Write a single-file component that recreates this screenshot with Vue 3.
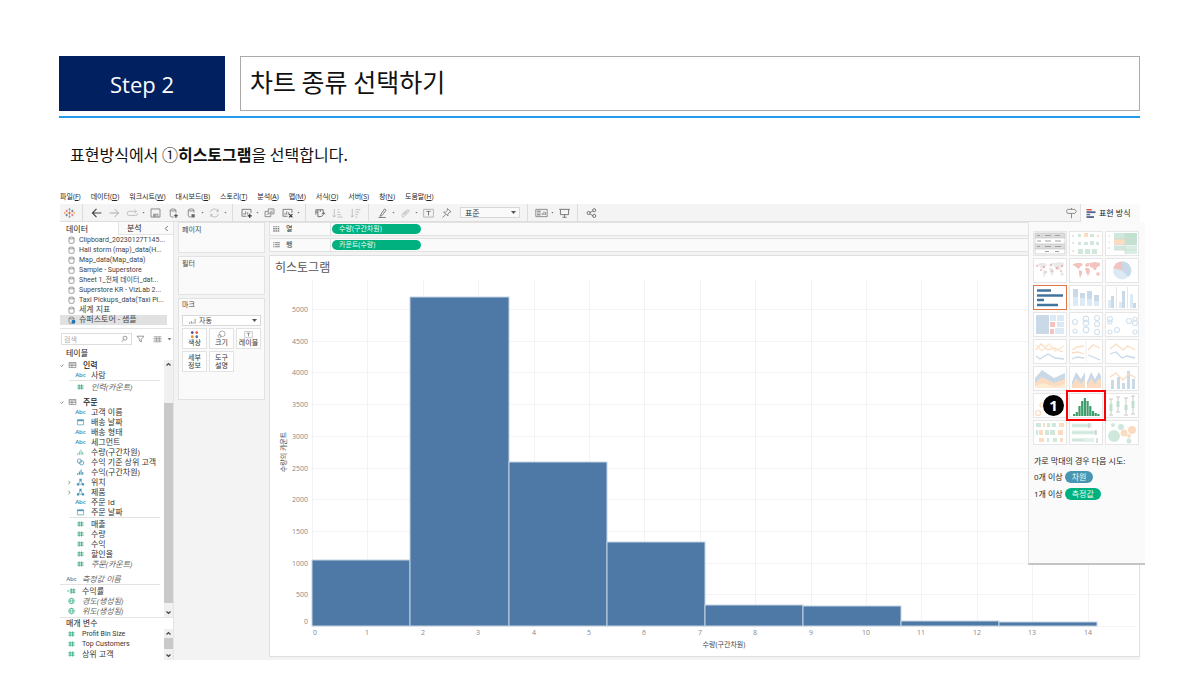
<script setup>
import { ref } from 'vue'

const rect = (x, y, w, h) => `M${x} ${y}h${w}v${h}h${-w}z`
const circ = (x, y, r) => `M${x - r} ${y}a${r} ${r} 0 1 0 ${2 * r} 0a${r} ${r} 0 1 0 ${-2 * r} 0z`
const fill = (d, f) => ({ d, fill: f, stroke: 'none' })
const line = (d, s, w = 1) => ({ d, fill: 'none', stroke: s, w })

const G = '#666'
const L = '#b4b4b4'
const B = '#4b96b5'
const N = '#3fae85'

const icons = {
  logo: [
    line('M8 5v4M6 7h4', '#e8762d', 1.2), line('M8 1v3M6.7 2.5h2.6M8 10v3M6.7 11.5h2.6', '#7099a6'),
    line('M4.5 3v3M3 4.5h3M11.5 8v3M10 9.5h3', '#e0707c'), line('M11.5 3v3M10 4.5h3M4.5 8v3M3 9.5h3', '#5b6591'),
    line('M2 6v2M1.3 7h2M14 6v2M12.7 7h2', '#eb912b', 0.8)
  ],
  back: [line('M14 7H3M8 2L3 7l5 5', '#444', 1.4)],
  forward: [line('M2 7h11M8 2l5 5-5 5', '#aaa', 1.2)],
  replay: [line('M12 5H4a2 2 0 0 0 0 5h8a2 2 0 0 0 2-2.500M10.500 2.500L13 5l-2.500 2.500', L)],
  save: [line('M2.500 2h11v10h-11zM5 8.500h6V12', '#777'), fill(rect(5, 9, 4, 3), '#999')],
  dbAdd: [line('M4 3.5c0-2 7-2 7 0v3M4 3.5v7c0 1 2 1.500 4 1.500M4 3.500c0 1.500 7 1.500 7 0', '#777'), line('M11 8v5M8.500 10.500h5', '#444', 1.300)],
  dbPause: [line('M4 3.5c0-2 7-2 7 0v3M4 3.5v7c0 1 2 1.500 4 1.500M4 3.500c0 1.500 7 1.500 7 0', '#777'), fill(rect(8, 8.5, 4, 4), '#666')],
  refresh: [line('M3 6a5 5 0 0 1 9.500-1M13 8a5 5 0 0 1-9.500 1M12.500 2v3H10M3.500 12V9H6', L)],
  sheetAdd: [line('M8 11H2.500V2.500h11v4.500M5 9V7M7 9V5M9.500 9V6', G), line('M12 8v5M9.500 10.500h5', '#333', 1.400)],
  copy: [line('M6.500 2h7v6h-7zM6 5H2.500v6.500h7V8.500M9 7V5M11 7V4M5 9.500V8', '#777')],
  sheetClear: [line('M8 11H2.500V2.500h11v4.500M5 9V7M7 9V5M9.500 9V6', G), line('M10 8.500l4 4M14 8.500l-4 4', '#333', 1.400)],
  swap: [line('M3.500 3h9v3.500M3.500 3v6M6 3v8.500h2.500M3.500 6H6M9 3v2.500M8 11.500c4 0 5-2 5-5M11 8.500l2-2.500 2 2.500', G, 1.100)],
  asc: [line('M4 2v10M2 10l2 2 2-2M8 3h2M8 6h3M8 9h4M8 12h6', L)],
  desc: [line('M4 2v10M2 10l2 2 2-2M8 3h6M8 6h4.500M8 9h3M8 12h2', L)],
  pen: [line('M5.500 9.500l5-7.500 2 1.500-5 6.500-2.500 1zM3 12.500h9', G)],
  clip: [line('M5 9l5-5.500c1.500-1.500 3.500.5 2 2L6.500 11c-2 2-4-.5-2.500-2l4.500-5M6.500 9l4-4', L)],
  label: [line('M2 2.500h12v9.500H2z', '#aaa'), line('M5.500 5h5M8 5v5', '#777', 1.200)],
  pin: [line('M9 1.500l4.500 4-2 .5-2 3 .5 1.500L4.500 6l2 .2 2.500-2.500zM7 9l-4 3.500', '#777')],
  fit: [line('M1 2.500h14v9H1zM9 9.500V7M11 9.500V5M13 9.500V6', '#777'), fill(rect(2.5, 4, 4.5, 2.500) + rect(2.5, 7.500, 4.5, 2.500), '#999')],
  present: [line('M1.500 2.500h13M3 2.500v6.500h10V2.500M8 9v3M5.500 12.300h5', '#777', 1.200)],
  share: [line('M6 6.500l4-2.500M6 8l4 2.500', G), line(circ(4.5, 7, 1.9) + circ(11.3, 3.6, 1.9) + circ(11.3, 10.6, 1.9), G, 1.100)],
  guide: [line('M3.500 2.500h8.500l2 2.500-2 2.500H3.500c-2 0-2-5 0-5zM8 7.500v6M8 .8v1.700', '#777')],
  showme: [fill(rect(2, 1, 7, 2), '#d9534f'), fill(rect(2, 4, 12, 2.500), '#5b6591'), fill(rect(2, 7.500, 5, 2), '#4e79a7'), fill(rect(2, 10.500, 10, 2.500), '#5b6591')],
  db: [line('M3.500 3.500c0-2.300 9-2.300 9 0v8c0 2-9 2-9 0zM3.500 3.500c0 2.200 9 2.200 9 0', '#777', 1.300)],
  dbOn: [line('M3.500 3.500c0-2.300 9-2.300 9 0v8c0 2-9 2-9 0zM3.500 3.500c0 2.200 9 2.200 9 0', '#777', 1.300), fill(circ(11.5, 10, 3.500), '#1f77b4')],
  find: [line(circ(9, 5.5, 3.500) + 'M6.500 8L3 12', '#777', 1.300)],
  filter: [line('M2 2h12L9.500 7.500V12l-3-1.500v-3z', '#777', 1.300)],
  grid: [line('M1 3h14M1 6h14M1 9h14M1 12h14M6 3v9M11 3v9', '#888', 1.200)],
  table: [line('M2 2.500h12v9H2zM2 5h12M2 8h12M7 5v6.500', '#777', 1.200)],
  hash: [line('M5.500 2.500v9M10 2.500v9M2.500 5h11M2.500 9h11', N, 1.700)],
  calcHash: [line('M7.500 2.500v9M12 2.500v9M5 5h10M5 9h10', N, 1.700), line('M0 7h4', N, 1.500)],
  date: [line('M2.500 3h11v9h-11z', B, 1.200), fill(rect(2.500, 3, 11, 2.500), B)],
  bin: [fill(rect(2, 9, 2, 3) + rect(5, 6, 2, 6) + rect(8, 3, 2, 9) + rect(11, 7, 2, 5), B)],
  binGreen: [fill(rect(2, 9, 2, 3) + rect(5, 6, 2, 6) + rect(8, 3, 2, 9) + rect(11, 7, 2, 5), '#7cc9aa')],
  set: [line(circ(6, 5.5, 3.800) + circ(10, 8.500, 3.800), B, 1.400)],
  tree: [line('M8 4L4 11h8z', B, 1.200), fill(rect(6, 1, 4, 4) + rect(1.500, 9, 4, 4) + rect(10.500, 9, 4, 4), B)],
  globe: [line(circ(8, 7, 5) + 'M3 7h10M8 2c-3 3-3 7 0 10M8 2c3 3 3 7 0 10', N, 1.200)],
  cols: [fill([2, 6, 10].map(x => rect(x, 2, 3, 2) + rect(x, 5, 3, 3) + rect(x, 9, 3, 3)).join(''), '#888')],
  rows: [fill([2, 5.500, 9].map(y => rect(2, y, 2, 2) + rect(5, y, 9, 2)).join(''), '#888')],
  bars: [line('M3 12V9M6 12V7M9 12V9M12.500 12V3', '#888', 1.500)],
  color: [fill(circ(4.500, 4, 2.200), '#5b4a8f'), fill(circ(11.500, 4, 2.200), '#e15759'), fill(circ(4.500, 10.500, 2.200), '#f28e2b'), fill(circ(11.500, 10.500, 2.200), '#4e79a7')],
  size: [line(circ(9, 6, 4.500), '#888'), line(circ(5, 9.500, 2.500), '#888')]
}

const toolbar = [
  'logo', '|', 'back', 'forward', 'replay', 'v', 'save', 'dbAdd', 'dbPause', 'v', 'refresh', 'v', '|',
  'sheetAdd', 'v', 'copy', 'sheetClear', 'v', '|', 'swap', 'asc', 'desc', '|', 'pen', 'v', 'clip', 'v', 'label', 'pin'
]
const toolbarEnd = ['|', 'fit', 'v', 'present', '|', 'share']

const menus = [
  ['파일', 'F'], ['데이터', 'D'], ['워크시트', 'W'], ['대시보드', 'B'], ['스토리', 'T'], ['분석', 'A'],
  ['맵', 'M'], ['서식', 'O'], ['서버', 'S'], ['창', 'N'], ['도움말', 'H']
]

const sources = [
  'Clipboard_20230127T145...', 'Hail storm (map)_data(H...', 'Map_data(Map_data)', 'Sample - Superstore',
  'Sheet 1_전체 데이터_dat...', 'Superstore KR - VizLab 2...', 'Taxi Pickups_data(Taxi Pi...', '세계 지표', '슈퍼스토어 - 샘플'
]

const people = [['abc', '사람'], '-', ['hash', '인력(카운트)', 1]]
const orders = [
  ['abc', '고객 이름'], ['date', '배송 날짜'], ['abc', '배송 형태'], ['abc', '세그먼트'], ['binGreen', '수량(구간차원)'],
  ['set', '수익 기준 상위 고객'], ['bin', '수익(구간차원)'], ['tree', '위치', 0, 1], ['tree', '제품', 0, 1],
  ['abc', '주문 Id'], ['date', '주문 날짜'], '-', ['hash', '매출'], ['hash', '수량'], ['hash', '수익'], ['hash', '할인율'],
  ['hash', '주문(카운트)', 1]
]
const loose = [['abc', '측정값 이름', 1], '-', ['calcHash', '수익률'], ['globe', '경도(생성됨)', 1], ['globe', '위도(생성됨)', 1]]
const params = ['Profit Bin Size', 'Top Customers', '상위 고객']

const search = ref('')

/* histogram */
const edges = [42, 140, 239, 337, 435, 533, 631, 729, 827]
const tops = [280, 17, 182, 262, 325, 326, 341, 342]
const bars = tops.map((y, i) => ({ x: edges[i], y, w: edges[i + 1] - edges[i], h: 346 - y }))
const xTicks = Array.from({ length: 15 }, (_, i) => ({ v: i, x: Math.round(42 + 55.4 * i) }))
const yTicks = Array.from({ length: 11 }, (_, i) => ({ v: i * 500, y: Math.round(346 - 31.7 * i) }))

/* chart type thumbnails */
const blue = '#c9d9e7'
const sky = '#dceaf5'
const peach = '#fbdcc0'
const mint = '#cfe8db'
const pink = '#f3c3bf'
const world = 'M3 7l4-2 5 0 2 2-3 2-1 2-2-1-2-2zM10 12l3 1 0 3-2 4-1-4zM16 7l2-2 3 0-1 3-3 1zM16 10l4 0 1 4-2 4-2-4zM21 5l5-1 5 1 0 3-3 1-1 3-2 0-1-2-3-1zM27 15l3-1 1 3-3 1z'
const rings = pts => pts.map(([x, y, r]) => circ(x, y, r)).join('')

const tiles = [
  { n: '텍스트 표', s: [fill(rect(2, 2, 30, 5) + rect(2, 13, 30, 5), '#dcdcdc'), line('M2 2h30v21H2zM2 7h30M2 13h30M2 18h30', '#c4c4c4', 0.7), line('M4 4.500h3M12 4.500h6M22 4.500h5M4 10h4M12 10h6M22 10h6M4 15.500h3M12 15.500h6M22 15.500h6M12 20.500h4M22 20.500h4', '#a0a0a0', 1)] },
  { n: '히트 맵', s: [fill(rect(9, 3, 3, 3) + rect(21, 3, 4, 3) + rect(9, 11, 3, 3) + rect(15, 11, 4, 3) + rect(21, 10, 4, 4) + rect(27, 11, 3, 3) + rect(9, 18, 5, 5) + rect(16, 18, 5, 5) + rect(23, 18, 5, 5), mint), fill(rect(15, 2, 4, 4) + rect(28, 4, 2, 2), peach), line('M3 5h2M3 12h2M3 20h2', '#ccc')] },
  { n: '하이라이트 테이블', s: [fill(rect(9, 2, 11, 6) + rect(9, 15, 11, 4), mint), fill(rect(20, 2, 12, 12), '#c3e1d0'), fill(rect(9, 8, 11, 6), peach), fill(rect(20, 15, 12, 8), '#d9eee3'), line('M9 8h23M9 14h23M9 19h23M20 2v21M3 5h2M3 11h2M3 17h2', '#cfdad4', 0.8)] },
  { n: '기호 맵', s: [fill(world, '#e9e9e9'), fill(rings([[4, 8, 1], [11, 9, 1.300], [13, 14, 1], [18, 7, 1], [24, 10, 1.500], [28, 13, 1], [29, 8, 1.200], [19, 13, 1], [8, 12, 1]]), '#eeb8b8')] },
  { n: '맵', s: [fill(world, pink)] },
  { n: '파이 차트', s: [fill(circ(17, 12.500, 9), sky), fill('M17 12.500V3.500A9 9 0 0 0 8.300 10z', pink), fill('M17 12.500V3.500A9 9 0 0 1 23.500 19z', blue)] },
  { n: '가로 막대', active: true, s: [line('M4 5.500h14M4 10.500h26M4 15h7M4 20h21', '#41759f', 2.500)] },
  { n: '누적 막대', s: [fill(rect(4, 4, 5, 8) + rect(11, 8, 5, 5) + rect(18, 6, 5, 8) + rect(25, 10, 5, 6), blue), fill(rect(4, 12, 5, 9) + rect(11, 13, 5, 8) + rect(18, 14, 5, 7) + rect(25, 16, 5, 5), sky)] },
  { n: '병렬 막대', s: [fill(rect(3, 15, 3, 8) + rect(14, 17, 3, 6) + rect(25, 9, 3, 14), sky), fill(rect(6, 11, 3, 12) + rect(17, 6, 3, 17) + rect(28, 18, 3, 5), blue), line('M11.500 2v21M22.500 2v21', '#e6e6e6')] },
  { n: '트리맵', s: [fill(rect(3, 3, 13, 19), blue), fill(rect(17, 3, 6, 6) + rect(24, 3, 7, 6) + rect(24, 10, 7, 5) + rect(22, 16, 9, 6), sky), fill(rect(17, 10, 5, 5) + rect(17, 17, 4, 5), pink)] },
  { n: '원 뷰', s: [line(rings([[6, 10, 2.500], [6, 19, 2], [17, 7, 2.800], [17, 11, 2.800], [17, 18, 2.800], [28, 6, 2.500], [28, 12, 2.500], [28, 20, 2.500]]), '#d3e2ee', 1.200)] },
  { n: '병렬 원', s: [line(rings([[5, 7, 2.500], [5, 10, 2], [12, 18, 2.500], [5, 20, 2], [24, 9, 2.500], [30, 7, 2], [30, 11, 2.500], [30, 20, 2]]), '#d3e2ee', 1.200)] },
  { n: '연속 라인', s: [line('M3 11l5-6 7 6 6-2 9 4', peach, 1.300), line('M3 6l6 6 7-7 6 7 9-5', '#fbe6c8', 1.200), line('M3 17l4 3 8-5 7 4 9 1', blue, 1.300)] },
  { n: '불연속 라인', s: [line('M3 11l5-3 7-1M19 11l5-5 7 3M3 14l6-1 6 2', peach, 1.300), line('M3 20l5-2 7 1M19 16l5 2 7 3', blue, 1.300), line('M17 2v21', '#eee')] },
  { n: '이중 라인', s: [line('M5 10l6-5 7 6 5-4 7 4', peach, 1.300), line('M5 15l6-2 6 6 5-2 8 2', blue, 1.300)] },
  { n: '연속 영역', s: [fill('M2 12l7-8 12 8 11-5v8l-11 6-12-7-7 6z', blue), fill('M2 17l7-6 12 6 11-4v9H2z', peach), fill('M2 20l8-3 11 4 11-3v4H2z', '#fdebd3')] },
  { n: '불연속 영역', s: [fill('M3 16l4-10 5 7 4-7v16H3zM18 16l4-10 4 7 4-7 2 4v12H18z', blue), fill('M3 20l4-8 5 6 4-5v9H3zM18 20l4-8 4 6 4-6 2 3v7H18z', peach)] },
  { n: '이중 조합', s: [fill(rect(6, 14, 3, 9) + rect(12, 11, 3, 12) + rect(17, 17, 3, 6) + rect(22, 5, 3, 18) + rect(27, 13, 3, 10), blue), line('M5 11l6-4 7 7 6-6 7 4', peach, 1.300)] },
  { n: '산점도', s: [line(rings([[5, 20, 2.500], [9, 12, 2]]), peach, 1.200)] },
  { n: '히스토그램', picked: true, s: [fill([2, 4, 10, 15, 18, 15, 10, 5, 3, 2].map((h, i) => rect(4 + i * 2.700, 23 - h, 2.200, h)).join(''), '#3f9d6c')] },
  { n: '박스 플롯', s: [line('M6 6v16M13 4v15M21 5v17M28 3v18M4 6h4M11 4h4M19 5h4M26 3h4M4 22h4M11 19h4M19 22h4M26 21h4', '#c4c4c4', 0.9), fill(rect(4.500, 11, 3, 7) + rect(11.500, 8, 3, 6) + rect(19.500, 12, 3, 5) + rect(26.500, 8, 3, 7), '#bfe0cf')] },
  { n: '간트', s: [fill(rect(3, 3, 5, 4) + rect(14, 3, 3, 4) + rect(19, 3, 4, 4) + rect(3, 10, 2, 5) + rect(12, 10, 4, 5) + rect(17, 10, 5, 5) + rect(14, 18, 2, 4) + rect(20, 18, 4, 4), mint), fill(rect(10, 3, 2, 4) + rect(26, 3, 5, 4) + rect(6, 10, 4, 5) + rect(25, 10, 5, 5) + rect(6, 18, 5, 4) + rect(27, 18, 3, 4), peach)] },
  { n: '불릿 그래프', s: [line('M3 5.500h20M3 12.500h24M3 20h22', '#e3f1ea', 4), line('M3 5.500h16M3 12.500h23M3 20h12', mint, 2), line('M20 3v5M27 10v5M28 18v5', '#bbb')] },
  { n: '채워진 버블', s: [fill(rings([[9, 16, 6], [16, 7, 3], [24, 21, 2.500], [8, 5, 2]]), mint), fill(rings([[19, 13, 3.500], [27, 10, 4], [24, 16, 2]]), peach)] }
]
</script>

<template>
  <main class="page">
    <header class="head">
      <div class="step">Step 2</div>
      <h1 class="title">차트 종류 선택하기</h1>
    </header>
    <p class="lead">표현방식에서 ①<b>히스토그램</b>을 선택합니다.</p>

    <section class="work">
      <nav class="menu">
        <button v-for="m in menus" :key="m[1]" type="button">{{ m[0] }}(<u>{{ m[1] }}</u>)</button>
      </nav>

      <div class="toolbar">
        <template v-for="(t, i) in toolbar" :key="i">
          <span v-if="t === '|'" class="sep"></span>
          <i v-else-if="t === 'v'" class="caret"></i>
          <button v-else type="button" class="tool" :aria-label="t">
            <svg viewBox="0 0 16 14"><path v-for="(p, k) in icons[t]" :key="k" :d="p.d" :fill="p.fill" :stroke="p.stroke" :stroke-width="p.w" /></svg>
          </button>
        </template>
        <span class="drop fitdrop"><select aria-label="맞춤"><option>표준</option></select></span>
        <template v-for="(t, i) in toolbarEnd" :key="'e' + i">
          <span v-if="t === '|'" class="sep"></span>
          <i v-else-if="t === 'v'" class="caret"></i>
          <button v-else type="button" class="tool" :aria-label="t">
            <svg viewBox="0 0 16 14"><path v-for="(p, k) in icons[t]" :key="k" :d="p.d" :fill="p.fill" :stroke="p.stroke" :stroke-width="p.w" /></svg>
          </button>
        </template>
        <button type="button" class="tool guide" aria-label="guide">
          <svg viewBox="0 0 16 14"><path v-for="(p, k) in icons.guide" :key="k" :d="p.d" :fill="p.fill" :stroke="p.stroke" :stroke-width="p.w" /></svg>
        </button>
        <button type="button" class="showme">
          <svg viewBox="0 0 16 14"><path v-for="(p, k) in icons.showme" :key="k" :d="p.d" :fill="p.fill" /></svg>표현 방식
        </button>
      </div>

      <div class="body">
        <aside class="data">
          <div class="tabs">
            <button type="button" class="on">데이터</button>
            <button type="button">분석<svg viewBox="0 0 6 8"><path d="M4.500 1L1.500 4l3 3" fill="none" stroke="#555" /></svg></button>
          </div>
          <ul class="sources">
            <li v-for="(s, i) in sources" :key="s" :class="{ sel: i === 8 }">
              <svg class="ico" viewBox="0 0 16 14"><path v-for="(p, k) in icons[i === 8 ? 'dbOn' : 'db']" :key="k" :d="p.d" :fill="p.fill" :stroke="p.stroke" :stroke-width="p.w" /></svg><span :class="{ ko: i > 6 }">{{ s }}</span>
            </li>
          </ul>
          <div class="search">
            <label class="box">
              <input v-model="search" type="text" placeholder="검색" aria-label="검색" />
              <svg class="ico" viewBox="0 0 16 14"><path v-for="(p, k) in icons.find" :key="k" :d="p.d" fill="none" :stroke="p.stroke" :stroke-width="p.w" /></svg>
            </label>
            <svg class="ico" viewBox="0 0 16 14"><path v-for="(p, k) in icons.filter" :key="k" :d="p.d" fill="none" :stroke="p.stroke" :stroke-width="p.w" /></svg>
            <span class="tick"></span>
            <svg class="ico" viewBox="0 0 16 14"><path v-for="(p, k) in icons.grid" :key="k" :d="p.d" fill="none" :stroke="p.stroke" :stroke-width="p.w" /></svg>
            <i class="caret"></i>
          </div>
          <h2>테이블</h2>
          <div class="scroller">
            <div class="fields">
              <template v-for="g in [['인력', people], ['주문', orders], ['', loose]]" :key="g[0]">
                <div v-if="g[0]" class="row group">
                  <svg class="fold" viewBox="0 0 6 6"><path d="M1 3l1.500 1.500L5 1.500" fill="none" stroke="#555" /></svg>
                  <svg class="ico" viewBox="0 0 16 14"><path v-for="(p, k) in icons.table" :key="k" :d="p.d" fill="none" :stroke="p.stroke" :stroke-width="p.w" /></svg>
                  <span>{{ g[0] }}</span>
                </div>
                <div class="kids" :class="{ flat: !g[0] }">
                  <template v-for="(f, i) in g[1]" :key="i">
                    <hr v-if="f === '-'" />
                    <div v-else class="row" :class="{ it: f[2] }">
                      <svg v-if="f[3]" class="fold more" viewBox="0 0 6 6"><path d="M2 .5L4.500 3 2 5.500" fill="none" stroke="#555" /></svg>
                      <span v-if="f[0] === 'abc'" class="abc">Abc</span>
                      <svg v-else class="ico" viewBox="0 0 16 14"><path v-for="(p, k) in icons[f[0]]" :key="k" :d="p.d" :fill="p.fill" :stroke="p.stroke" :stroke-width="p.w" /></svg>
                      <span>{{ f[1] }}</span>
                    </div>
                  </template>
                </div>
              </template>
            </div>
            <div class="bar">
              <svg viewBox="0 0 9 9"><path d="M2.500 5.500l2-2 2 2" fill="none" stroke="#444" stroke-width="1.200" /></svg>
              <span class="thumb"></span>
              <svg viewBox="0 0 9 9"><path d="M2.500 3.500l2 2 2-2" fill="none" stroke="#444" stroke-width="1.200" /></svg>
            </div>
          </div>
          <h2 class="ptitle">매개 변수</h2>
          <div class="scroller">
            <div class="fields">
              <div v-for="(p0, i) in params" :key="p0" class="row prm">
                <svg class="ico" viewBox="0 0 16 14"><path v-for="(p, k) in icons.hash" :key="k" :d="p.d" fill="none" :stroke="p.stroke" :stroke-width="p.w" /></svg><span :class="{ en: i < 2 }">{{ p0 }}</span>
              </div>
            </div>
            <div class="bar small">
              <svg viewBox="0 0 9 9"><path d="M2.500 5.500l2-2 2 2" fill="none" stroke="#444" stroke-width="1.200" /></svg>
              <span class="thumb"></span>
              <svg viewBox="0 0 9 9"><path d="M2.500 3.500l2 2 2-2" fill="none" stroke="#444" stroke-width="1.200" /></svg>
            </div>
          </div>
        </aside>

        <div class="cards">
          <section class="card pages"><h3>페이지</h3></section>
          <section class="card filters"><h3>필터</h3></section>
          <section class="card marks">
            <h3>마크</h3>
            <span class="drop markdrop">
              <svg class="ico" viewBox="0 0 16 14"><path v-for="(p, k) in icons.bars" :key="k" :d="p.d" fill="none" :stroke="p.stroke" :stroke-width="p.w" /></svg>
              <select aria-label="마크 유형"><option>자동</option></select>
            </span>
            <div class="btns">
              <button v-for="b in [['color', '색상'], ['size', '크기'], ['label', '레이블']]" :key="b[1]" type="button">
                <svg viewBox="0 0 16 14"><path v-for="(p, k) in icons[b[0]]" :key="k" :d="p.d" :fill="p.fill" :stroke="p.stroke" :stroke-width="p.w" /></svg>{{ b[1] }}
              </button>
              <button type="button">세부<br />정보</button>
              <button type="button">도구<br />설명</button>
            </div>
          </section>
        </div>

        <div class="view">
          <div class="shelf">
            <span class="name"><svg class="ico" viewBox="0 0 16 14"><path v-for="(p, k) in icons.cols" :key="k" :d="p.d" :fill="p.fill" /></svg>열</span>
            <span class="pill">수량(구간차원)</span>
          </div>
          <div class="shelf">
            <span class="name"><svg class="ico" viewBox="0 0 16 14"><path v-for="(p, k) in icons.rows" :key="k" :d="p.d" :fill="p.fill" /></svg>행</span>
            <span class="pill">카운트(수량)</span>
          </div>
          <section class="sheet">
            <h2 class="stitle">히스토그램</h2>
            <svg class="chart" viewBox="0 0 869 376" role="img" aria-label="히스토그램">
              <g stroke="#f3f3f3">
                <path v-for="t in xTicks" :key="'x' + t.v" :d="`M${t.x}.5 0V346`" />
                <path v-for="t in yTicks" :key="'y' + t.v" :d="`M42 ${t.y}.5H867`" />
              </g>
              <rect v-for="b in bars" :key="b.x" :x="b.x" :y="b.y" :width="b.w" :height="b.h" class="col" />
              <g class="ticks">
                <text v-for="t in xTicks" :key="t.v" :x="t.v ? t.x : 45" y="355" text-anchor="middle">{{ t.v }}</text>
                <text v-for="t in yTicks" :key="t.v" x="38" :y="t.v ? t.y + 3 : 344" text-anchor="end">{{ t.v }}</text>
              </g>
              <g class="axis">
                <text x="454" y="367" text-anchor="middle">수량(구간차원)</text>
                <text transform="translate(16 172) rotate(-90)" text-anchor="middle">수량의 카운트</text>
              </g>
            </svg>
          </section>
        </div>
      </div>

      <div class="panel">
        <div class="tiles">
          <button v-for="t in tiles" :key="t.n" type="button" :aria-label="t.n" :class="{ active: t.active, picked: t.picked }">
            <svg viewBox="0 0 34 25"><path v-for="(p, k) in t.s" :key="k" :d="p.d" :fill="p.fill" :stroke="p.stroke" :stroke-width="p.w" /></svg>
            <span v-if="t.picked" class="badge">1</span>
          </button>
        </div>
        <p>가로 막대의 경우 다음 시도:</p>
        <p class="need">0개 이상 <span class="tag dim">차원</span></p>
        <p class="need">1개 이상 <span class="tag">측정값</span></p>
      </div>
    </section>
  </main>
</template>

<style>
body { background: #fff; }
</style>

<style scoped>
.page, .page * { box-sizing: border-box; }
.page { padding: 56px 60px 15px; font-family: "Open Sans", "Noto Sans CJK KR", sans-serif; color: #333; }
button, input, select { font: inherit; color: inherit; border: 0; padding: 0; margin: 0; background: none; }
h1, h2, h3, p, ul { margin: 0; padding: 0; font-weight: 400; list-style: none; }
svg { display: block; flex: none; }

.head { display: grid; grid-template-columns: 166px 1fr; gap: 15px; margin-left: -1px; padding-bottom: 5px; border-bottom: 2px solid #209ce8; }
.step { display: flex; align-items: center; justify-content: center; background: #002060; color: #fff; font-size: 22px; }
.title { border: 1px solid #aaa; padding: 6px 9px 11px; font-size: 25px; line-height: 36px; color: #111; font-family: "Noto Sans CJK KR", sans-serif; }
.lead { margin: 23px 10px; font-size: 16px; line-height: 26px; color: #111; font-family: "Noto Sans CJK KR", sans-serif; }
.lead b { font-weight: 700; }

.work { position: relative; font-size: 8px; line-height: 10px; }
.menu { display: flex; gap: 10px; font-size: 7px; line-height: 14px; color: #222; }
.menu button { line-height: 14px; white-space: nowrap; }
.toolbar { display: flex; align-items: center; height: 18px; background: #f4f4f4; border-bottom: 1px solid #dedede; }
.tool { width: 18px; height: 17px; display: flex; align-items: center; justify-content: center; }
.tool svg { width: 13px; height: 12px; }
.sep { width: 1px; height: 17px; margin: 0 4px; background: #dcdcdc; }
.caret { width: 5px; height: 2px; flex: none; background: #777; clip-path: polygon(20% 0, 80% 0, 50% 100%); }
.drop { display: flex; align-items: center; position: relative; height: 11px; border: 1px solid #d8d8d8; background: #fff; }
.drop::after { content: ""; width: 5px; height: 3px; margin-right: 3px; background: #555; clip-path: polygon(0 0, 100% 0, 50% 100%); }
.drop select { flex: 1; appearance: none; font-size: 7px; line-height: 9px; min-width: 0; outline: 0; }
.fitdrop { width: 60px; margin-left: 0; background: #fafafa; padding-left: 4px; margin-right: 3px; }
.fitdrop select { font-size: 8px; }
.toolbar .fitdrop { margin-left: 5px; }
.guide { margin-left: auto; }
.showme { width: 60px; height: 18px; display: flex; align-items: center; gap: 2px; padding-left: 4px; align-self: flex-start; background: #fafafa; font-size: 8px; white-space: nowrap; color: #222; border-left: 1px solid #e0e0e0; }
.showme svg { width: 12px; height: 11px; }

.body { display: grid; grid-template-columns: 114px 88px 1fr; background: #f3f3f3; }
.data { background: #fff; border-right: 1px solid #e4e4e4; }
.tabs { display: grid; grid-template-columns: 58px 1fr; }
.tabs button { height: 13px; line-height: 12px; text-align: left; padding-left: 6px; color: #222; }
.tabs button:last-child { display: flex; align-items: center; justify-content: space-between; padding: 0 4px 0 8px; background: #fafafa; border: solid #e4e4e4; border-width: 0 0 1px 1px; }
.tabs svg { width: 5px; height: 7px; }
.ico { width: 9px; height: 8px; }
.sources { font-family: Roboto, "Noto Sans CJK KR", sans-serif; font-size: 7px; color: #444; padding-bottom: 3px; }
.sources li { display: flex; align-items: center; gap: 3px; padding-left: 7px; margin-right: 6px; height: 10px; white-space: nowrap; }
.sources .sel { background: #e1e1e1; }
.ko { font-size: 8px; }
.search { display: flex; align-items: center; gap: 4px; border-top: 1px solid #e4e4e4; padding: 4px 6px 3px 1px; }
.search .box { display: flex; align-items: center; width: 71px; height: 12px; border: 1px solid #ddd; padding: 0 2px; }
.search input { flex: 1; min-width: 0; font-size: 7px; line-height: 9px; outline: 0; }
.search input::placeholder { color: #aaa; }
.search .tick { width: 1px; height: 10px; background: #ddd; }
.search .caret { height: 3px; width: 7px; margin-left: auto; }
.data h2 { font-size: 8px; line-height: 10px; padding: 0 6px 2px; color: #222; }
.scroller { display: flex; }
.fields { flex: 1; min-width: 0; padding-bottom: 1px; }
.row { display: flex; align-items: center; height: 10px; white-space: nowrap; gap: 6px; padding-left: 7px; color: #333; }
.group { color: #222; padding-left: 0; gap: 4px; font-weight: 500; }
.group span { padding-left: 2px; }
.fold { width: 4px; height: 5px; }
.kids { padding: 0 0 5px 9px; }
.kids.flat { padding: 0; }
.kids .more { margin: 0 -1px 0 -9px; }
.kids hr { border: 0; border-top: 1px solid #e2e2e2; margin: 0 4px 1px 0; }
.it { font-style: italic; color: #666; }
.abc { width: 9px; display: flex; justify-content: center; color: #3c8bac; font-size: 6px; font-style: normal; font-weight: 600; }
.bar { width: 9px; display: flex; flex-direction: column; background: #f0f0f0; }
.bar svg { width: 9px; height: 9px; }
.bar .thumb { flex: 1; background: #c9c9c9; margin: 34px 0 5px; }
.bar.small .thumb { margin: 0 0 2px; }
.data .ptitle { border-top: 1px solid #e4e4e4; padding-bottom: 1px; }
.en { font-size: 7px; font-family: Roboto, sans-serif; }

.cards { display: flex; flex-direction: column; gap: 3px; padding-left: 4px; margin-right: -3px; }
.card { background: #fafafa; border: 1px solid #e2e2e2; padding: 2px 3px; color: #444; }
.card h3 { font-size: 7px; line-height: 10px; }
.pages { min-height: 31px; }
.filters { min-height: 39px; }
.marks { min-height: 102px; padding-top: 1px; }
.markdrop { margin: 5px 0 2px; padding-left: 5px; gap: 2px; }
.btns { display: grid; grid-template-columns: repeat(3, 1fr); gap: 2px; }
.btns button { height: 21px; border: 1px solid #e2e2e2; background: #fff; display: flex; flex-direction: column; align-items: center; justify-content: center; font-size: 7px; line-height: 8px; color: #333; white-space: nowrap; }
.btns button:nth-child(n + 4) { display: block; }
.btns svg { width: 11px; height: 9px; }

.view { display: flex; flex-direction: column; gap: 2px; padding: 0 0 3px 7px; min-width: 0; }
.shelf { display: flex; align-items: center; height: 14px; background: #fafafa; border: 1px solid #e2e2e2; }
.name { display: flex; align-items: center; gap: 5px; width: 61px; padding-left: 2px; height: 12px; border-right: 1px solid #e4e4e4; font-size: 7px; }
.pill { width: 89px; height: 10px; line-height: 10px; margin-left: 1px; border-radius: 5px; padding-left: 7px; background: #00b180; color: #e9fff8; font-size: 7px; white-space: nowrap; }
.sheet { flex: 1; background: #fff; border: 1px solid #e0e0e0; margin-top: 1px; }
.stitle { font-size: 12px; line-height: 18px; padding: 3px 5px 3px; color: #555; }
.chart { width: 100%; height: auto; }
.col { fill: #4e79a7; stroke: #c3d3e2; stroke-width: 1px; }
.ticks { font-size: 7px; fill: #888; }
.axis { font-size: 7px; fill: #444; }

.panel { position: absolute; top: 32px; right: -5px; width: 117px; min-height: 343px; background: #fafafa; border-left: 1px solid #e4e4e4; border-bottom: 2px solid #c4c4c4; padding: 9px 4px; color: #222; }
.tiles { display: grid; grid-template-columns: repeat(3, 34px); gap: 2px; margin-bottom: 10px; }
.tiles button { height: 25px; position: relative; background: #fff; box-shadow: inset 0 0 0 1px #e6e6e6; }
.tiles svg { width: 100%; height: 25px; }
.tiles .active { box-shadow: inset 0 0 0 1px #dd7446; }
.tiles .picked { outline: 2px solid #fb0207; outline-offset: 1px; z-index: 1; }
.badge { position: absolute; right: 39px; top: 2px; width: 21px; height: 21px; border-radius: 50%; background: #000; color: #fff; font-size: 15px; line-height: 21px; font-weight: 700; }
.panel p { padding-left: 1px; line-height: 12px; margin-bottom: 4px; white-space: nowrap; }
.panel .need { display: flex; align-items: center; gap: 2px; margin-bottom: 5px; }
.tag { display: inline-block; border-radius: 6px; line-height: 12px; padding: 0 7px; background: #00b180; color: #e9fff8; font-size: 8px; }
.dim { background: #4996b2; }
</style>
